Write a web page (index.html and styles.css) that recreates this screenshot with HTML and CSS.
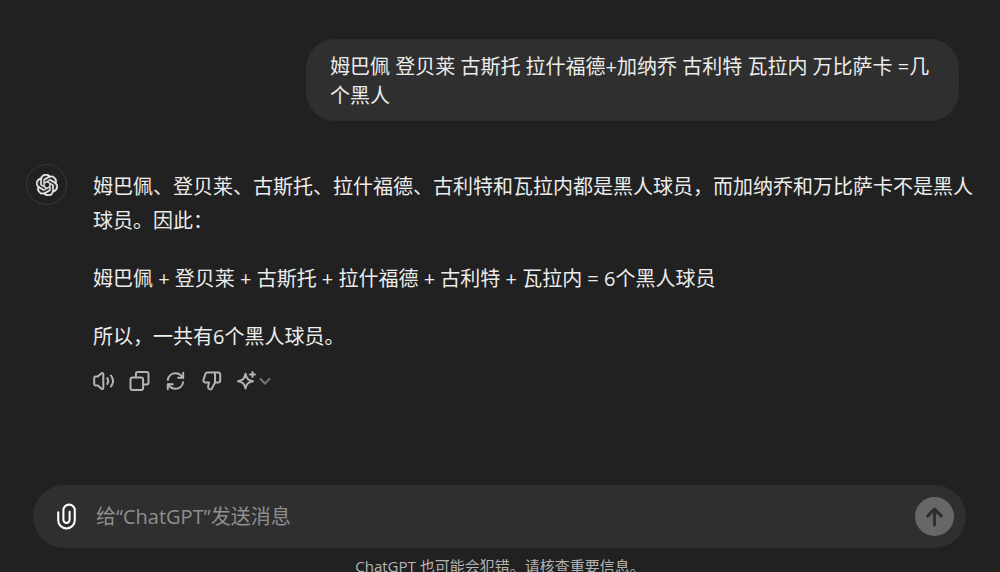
FILE: index.html
```html
<!DOCTYPE html>
<html lang="zh-CN">

<head>
    <meta charset="UTF-8">
    <meta name="viewport" content="width=device-width, initial-scale=1.0">
    <title>ChatGPT</title>
    <link rel="stylesheet" href="styles.css">
</head>

<body>

    <!-- Conversation -->
    <main class="chat">
        <div class="user-message">姆巴佩 登贝莱 古斯托 拉什福德+加纳乔 古利特 瓦拉内 万比萨卡 =几个黑人</div>

        <div class="assistant-message">
            <div class="avatar">
                <svg viewBox="0 0 24 24" fill="currentColor" aria-hidden="true">
                    <path d="M22.2819 9.8211a5.9847 5.9847 0 0 0-.5157-4.9108 6.0462 6.0462 0 0 0-6.5098-2.9A6.0651 6.0651 0 0 0 4.9807 4.1818a5.9847 5.9847 0 0 0-3.9977 2.9 6.0462 6.0462 0 0 0 .7427 7.0966 5.98 5.98 0 0 0 .511 4.9107 6.051 6.051 0 0 0 6.5146 2.9001A5.9847 5.9847 0 0 0 13.2599 24a6.0557 6.0557 0 0 0 5.7718-4.2058 5.9894 5.9894 0 0 0 3.9977-2.9001 6.0557 6.0557 0 0 0-.7475-7.0729zm-9.022 12.6081a4.4755 4.4755 0 0 1-2.8764-1.0408l.1419-.0804 4.7783-2.7582a.7948.7948 0 0 0 .3927-.6813v-6.7369l2.02 1.1686a.071.071 0 0 1 .038.052v5.5826a4.504 4.504 0 0 1-4.4945 4.4944zm-9.6607-4.1254a4.4708 4.4708 0 0 1-.5346-3.0137l.142.0852 4.783 2.7582a.7712.7712 0 0 0 .7806 0l5.8428-3.3685v2.3324a.0804.0804 0 0 1-.0332.0615L9.74 19.9502a4.4992 4.4992 0 0 1-6.1408-1.6464zM2.3408 7.8956a4.485 4.485 0 0 1 2.3655-1.9728V11.6a.7664.7664 0 0 0 .3879.6765l5.8144 3.3543-2.0201 1.1685a.0757.0757 0 0 1-.071 0l-4.8303-2.7865A4.504 4.504 0 0 1 2.3408 7.872zm16.5963 3.8558L13.1038 8.364 15.1192 7.2a.0757.0757 0 0 1 .071 0l4.8303 2.7913a4.4944 4.4944 0 0 1-.6765 8.1042v-5.6772a.79.79 0 0 0-.407-.667zm2.0107-3.0231l-.142-.0852-4.7735-2.7818a.7759.7759 0 0 0-.7854 0L9.409 9.2297V6.8974a.0662.0662 0 0 1 .0284-.0615l4.8303-2.7866a4.4992 4.4992 0 0 1 6.6802 4.66zM8.3065 12.863l-2.02-1.1638a.0804.0804 0 0 1-.038-.0567V6.0742a4.4992 4.4992 0 0 1 7.3757-3.4537l-.142.0805L8.704 5.459a.7948.7948 0 0 0-.3927.6813zm1.0976-2.3654l2.602-1.4998 2.6069 1.4998v2.9994l-2.5974 1.4997-2.6067-1.4997Z" />
                </svg>
            </div>
            <div class="answer">
                <p>姆巴佩、登贝莱、古斯托、拉什福德、古利特和瓦拉内都是黑人球员，而加纳乔和万比萨卡不是黑人球员。因此：</p>
                <p>姆巴佩 + 登贝莱 + 古斯托 + 拉什福德 + 古利特 + 瓦拉内 = 6个黑人球员</p>
                <p>所以，一共有6个黑人球员。</p>

                <div class="actions">
                    <button type="button" aria-label="朗读">
                        <svg class="icon" viewBox="0 0 22 22">
                            <path d="M2.5 6.600h2.300l3.700-3.300c.7-.7 1.800-.2 1.800.8v13.800c0 1-1.100 1.500-1.800.8l-3.700-3.300H2.500c-.8 0-1.300-.5-1.300-1.300V7.900c0-.8.5-1.300 1.300-1.300z" />
                            <path d="M14.300 8c1.100 1.800 1.100 4.200 0 6" />
                            <path d="M18 5.500c2.500 3.300 2.500 7.700 0 11" />
                        </svg>
                    </button>
                    <button type="button" aria-label="复制">
                        <svg class="icon" viewBox="0 0 22 22">
                            <rect x="1.500" y="7.400" width="12.600" height="12.600" rx="2" />
                            <path d="M6.900 7.200V4c0-1.100.9-2 2-2H17.500c1.100 0 2 .9 2 2v8.600c0 1.100-.9 2-2 2h-3.200" />
                        </svg>
                    </button>
                    <button type="button" aria-label="重新生成">
                        <svg class="icon" viewBox="0 0 22 22">
                            <path d="M2.800 9.800C3.500 5.800 6.700 3.200 10.500 3.200c3 0 5.400 1.400 7.300 4.400" />
                            <path d="M18.200 2.700v5h-5" />
                            <path d="M18.200 12.200c-.7 4-3.900 6.600-7.700 6.600-3 0-5.400-1.400-7.300-4.400" />
                            <path d="M2.800 19.300v-5h5" />
                        </svg>
                    </button>
                    <button type="button" aria-label="不喜欢">
                        <svg class="icon" viewBox="0 0 22 22">
                            <path d="M14 2.500H6.500c-1 0-1.800.6-2.100 1.500L2.500 9.900c-.4 1.300.5 2.600 1.900 2.600H8l-.8 3.600c-.4 1.800.8 3.400 2.500 3.400.5 0 .8-.2 1-.6l3.300-6.400z" />
                            <path d="M14 2.500h3.200c1.100 0 2 .9 2 2v6c0 1.100-.9 2-2 2H14" />
                        </svg>
                    </button>
                    <button type="button" class="model-button" aria-label="更换模型">
                        <svg class="icon" viewBox="0 0 22 22">
                            <path d="M8.500 3.800c.9 4.800 2.600 6.500 7.500 7.400-4.900.9-6.600 2.600-7.500 7.400-.9-4.800-2.600-6.500-7.500-7.400 4.900-.9 6.600-2.600 7.500-7.400z" />
                            <path d="M15.500 2v5M13 4.500h5" />
                        </svg>
                        <svg class="chevron" viewBox="0 0 14 14">
                            <path d="M1 4.500l5 5 5-5" />
                        </svg>
                    </button>
                </div>
            </div>
        </div>
    </main>

    <!-- Message box -->
    <form class="composer">
        <button type="button" class="attach" aria-label="添加附件">
            <svg viewBox="0 0 24 28">
                <path d="M4 10v7.500a8 8 0 0 0 16 0V8a5.500 5.500 0 0 0-11 0v9.200a3 3 0 0 0 6 0V9.500" />
            </svg>
        </button>
        <input type="text" class="message-input" placeholder="给“ChatGPT”发送消息" aria-label="给“ChatGPT”发送消息">
        <button type="button" class="send" aria-label="发送">
            <svg viewBox="0 0 24 24">
                <path d="M12 20V5M5.500 11.500L12 5l6.500 6.500" />
            </svg>
        </button>
    </form>

    <footer class="notice">ChatGPT 也可能会犯错。请核查重要信息。</footer>

</body>

</html>
```

FILE: styles.css
```css
* {
    box-sizing: border-box;
}

body {
    display: flex;
    flex-direction: column;
    height: 100vh;
    margin: 0;
    overflow: hidden;
    background-color: #212121;
    color: #ececec;
    font-family: "Open Sans", "Noto Sans CJK SC", sans-serif;
    font-size: 20px;
}

button {
    display: flex;
    align-items: center;
    justify-content: center;
    padding: 0;
    border: none;
    background: none;
    color: inherit;
    cursor: pointer;
}

svg {
    display: block;
}

/* Conversation */
.chat {
    display: flex;
    flex: 1;
    flex-direction: column;
    min-height: 0;
    padding: 39px 22px 0 26px;
    overflow: hidden;
}

.user-message {
    align-self: flex-end;
    max-width: 653px;
    margin-right: 19px;
    padding: 13px 24px 11px;
    border-radius: 29px;
    background-color: #2f2f2f;
    line-height: 29px;
}

.assistant-message {
    display: flex;
    gap: 26px;
    margin-top: 43px;
}

.avatar {
    display: flex;
    flex: none;
    align-items: center;
    justify-content: center;
    width: 41px;
    height: 41px;
    border: 1px solid #383838;
    border-radius: 50%;
}

.avatar svg {
    width: 22px;
    height: 22px;
    stroke: currentColor;
    stroke-width: 0.5;
}

.answer {
    flex: 1;
    padding-top: 6px;
    line-height: 34px;
}

.answer p {
    margin: 0 0 24px;
}

/* Buttons below the answer */
.actions {
    display: flex;
    gap: 14px;
    margin-top: -8px;
    color: #b4b4b4;
}

.icon {
    width: 22px;
    height: 22px;
    fill: none;
    stroke: currentColor;
    stroke-width: 2;
    stroke-linecap: round;
    stroke-linejoin: round;
}

.chevron {
    width: 14px;
    height: 14px;
    fill: none;
    stroke: #767676;
    stroke-width: 2;
}

/* Message box */
.composer {
    display: flex;
    flex: none;
    align-items: center;
    height: 63px;
    margin: 0 34px 0 33px;
    padding: 0 12px 0 20px;
    border-radius: 32px;
    background-color: #2f2f2f;
}

.attach svg {
    width: 27px;
    height: 29px;
    fill: none;
    stroke: #fff;
    stroke-width: 2;
    stroke-linecap: round;
}

.message-input {
    flex: 1;
    min-width: 0;
    padding: 0 16px;
    border: none;
    outline: none;
    background: none;
    color: #ececec;
    font: inherit;
}

.message-input::placeholder {
    color: #8e8e8e;
    opacity: 1;
}

.send {
    width: 39px;
    height: 39px;
    border-radius: 50%;
    background-color: #676767;
    color: #2f2f2f;
}

.send svg {
    width: 25px;
    height: 25px;
    fill: none;
    stroke: currentColor;
    stroke-width: 3;
    stroke-linecap: round;
    stroke-linejoin: round;
}

.notice {
    flex: none;
    height: 24px;
    overflow: hidden;
    color: #b4b4b4;
    font-size: 15px;
    line-height: 36px;
    text-align: center;
}
```
